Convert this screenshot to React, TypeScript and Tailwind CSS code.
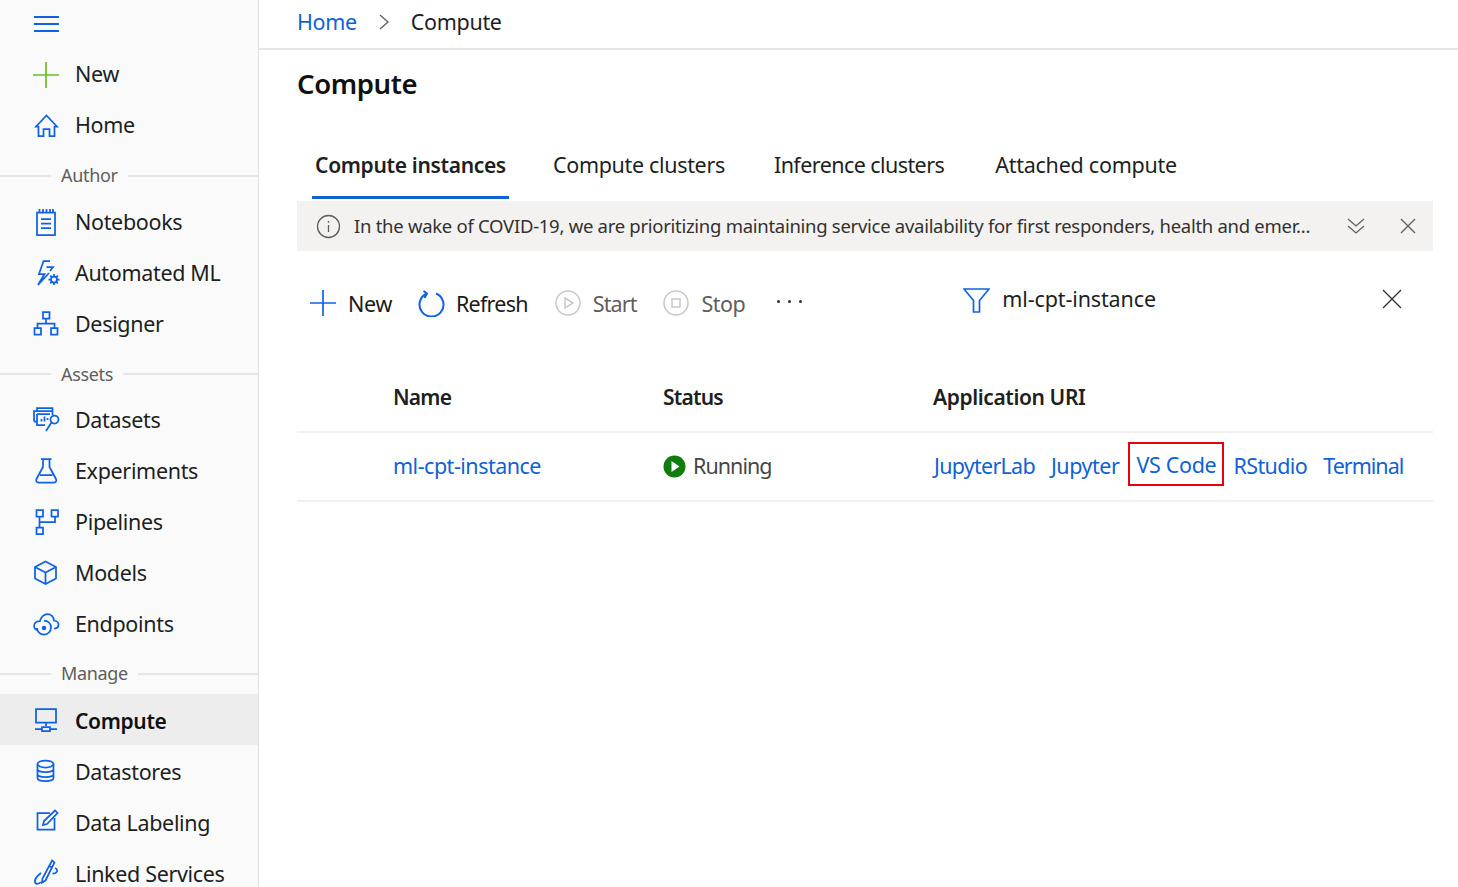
import React from 'react';

const blue = '#0f62e6';

function Ico({ children, color = blue, size = 28, sw = 1.75 }: { children: React.ReactNode; color?: string; size?: number; sw?: number }) {
  return (
    <svg width={size} height={size} viewBox="0 0 28 28" fill="none" stroke={color} strokeWidth={sw} className="shrink-0">
      {children}
    </svg>
  );
}

const icons: Record<string, React.ReactNode> = {
  plus: <Ico color="#6bbf1f" sw={1.7}><path d="M14 1v26M1 14h26" /></Ico>,
  home: (
    <Ico>
      <path d="M4 14.500 14.500 3.500 25 14.500h-2.500V24h-5v-7h-6v7h-5v-9.500z" />
    </Ico>
  ),
  notebook: (
    <Ico>
      <path d="M5 3.500h18V26H5zM7.500 0v3.500M11 0v3.500M14.500 0v3.500M18 0v3.500M21 0v3.500M9 10h10M9 14.500h10M9 19h10" />
    </Ico>
  ),
  auto: (
    <Ico>
      <path d="M18 1h-6.500L7 14h5.500L6 25l11-12M14.500 7H21l-3 4" />
      <circle cx="22" cy="19.500" r="3" />
      <path d="M22 14v2.500M22 22.500V25M16.500 19.500H19M25 19.500h2.500M18.200 15.700l1.700 1.700M24.100 21.600l1.700 1.700M25.800 15.700l-1.700 1.700M19.900 21.600l-1.700 1.700" />
    </Ico>
  ),
  designer: (
    <Ico>
      <path d="M11 1h6.500v6.500H11zM2.500 17H9v6.500H2.500zM19 17h6.500v6.500H19zM14 7.500V12.500M5.500 17v-4.500h17V17" />
    </Ico>
  ),
  datasets: (
    <Ico>
      <path d="M5 4V1h15.500v3M2 14.500V4h18.500v4M2 14.500h3M5 7h13M5 7v11h8" />
      <path d="M9.500 14.500V12M12.500 14.500V9.500M15.500 13v-2" />
      <circle cx="22.500" cy="12.500" r="4" />
      <path d="M19.500 15.500 14 24" />
    </Ico>
  ),
  flask: (
    <Ico>
      <path d="M9 1h10.500M11 1v8L4.500 21c-.8 1.800 0 3.500 2 3.500h15.500c2 0 2.800-1.700 2-3.500L17.500 9V1M8 17h12.500" />
    </Ico>
  ),
  pipelines: (
    <Ico>
      <path d="M4.500 1H11v6.500H4.500zM19.500 1H26v6.500h-6.500zM4.500 18.500H11V25H4.500zM7.500 7.500v11M7.500 13h15.500V7.500" />
    </Ico>
  ),
  cube: (
    <Ico>
      <path d="M13.500 1.500 24 7v11.500l-10.500 5.500L3 18.500V7zM3 7l10.500 5.500L24 7M13.500 12.500V24" />
    </Ico>
  ),
  endpoints: (
    <Ico>
      <path d="M5 19C2.500 18 1.500 15.500 2.500 13 3.500 10.500 6 10 8 10 9 5.500 12.500 3 15.500 3 19 3 21.500 6 22 9.500c3 .5 4.500 2 4.500 4 0 2.500-2 4-4.500 4" />
      <path d="M12 9.500c4 0 7 3 7 7s-3 7-7 7-7-3-7-6.500" />
      <circle cx="12" cy="17" r="2.300" fill={blue} stroke="none" />
    </Ico>
  ),
  compute: (
    <Ico>
      <path d="M4 3h20v13.500H4zM14 16.500V20M3 23h7M18 23h7M10 25v-4h8v4z" />
    </Ico>
  ),
  datastore: (
    <Ico>
      <ellipse cx="13.500" cy="7" rx="8" ry="3.500" />
      <path d="M5.500 7v14c0 2 3.500 3 8 3s8-1 8-3V7M5.500 12c0 2 3.500 3 8 3s8-1 8-3M5.500 17c0 2 3.500 3 8 3s8-1 8-3" />
    </Ico>
  ),
  labeling: (
    <Ico>
      <path d="M18 5H5.500v16.500h17V10M11 17l1-4L23 2.500l2.500 2.500L15 16z" />
    </Ico>
  ),
  linked: (
    <Ico>
      <path d="M20 1.500l2.500 2-9 18-3.500 2 .5-4zM17.500 7l3 2" />
      <path d="M23 9c2.500 1 3 3.500.5 5-1 .5-2 .5-3 .5" />
      <path d="M9 14C5 17 2 20 3 23.500c1 2 4 1.500 6-.5" />
    </Ico>
  ),
};

function NavItem({ icon, label, active, low }: { icon: string; label: string; active?: boolean; low?: boolean }) {
  return (
    <div className={`flex h-[51px] items-center pl-[32px] ${active ? 'bg-[#ededed] text-[21px] font-semibold text-[#111]' : 'text-[#201f1e]'}`}>
      {icons[icon]}
      <span className={`ml-[15px] whitespace-nowrap ${low ? 'pt-[4px]' : ''}`}>{label}</span>
    </div>
  );
}

function NavHeader({ label, className }: { label: string; className: string }) {
  return (
    <div className={`flex items-center pt-[3px] text-[18px] text-[#605e5c] ${className}`}>
      <div className="h-[2px] w-[51px] bg-[#e6e6e6]" />
      <span className="mx-[10px]">{label}</span>
      <div className="h-[2px] flex-1 bg-[#e6e6e6]" />
    </div>
  );
}

function Toolbtn({ icon, label, disabled, labelClass }: { icon: React.ReactNode; label: string; disabled?: boolean; labelClass?: string }) {
  return (
    <div className={`flex items-center gap-[12px] ${disabled ? 'text-[#605e5c]' : 'text-[#1b1a19]'}`}>
      {icon}
      <span className={`pt-[2px] ${labelClass ?? ''}`}>{label}</span>
    </div>
  );
}

export default function App() {
  return (
    <div
      className="flex h-[887px] w-[1458px] overflow-hidden bg-white text-[21.5px] tracking-[-0.33px]"
      style={{ fontFamily: '"Noto Sans", "Open Sans", sans-serif' }}
    >
      <aside className="h-full w-[259px] shrink-0 border-r border-[#e1e1e1] bg-[#fafafa]">
        <div className="flex h-[49px] items-center pb-[2px] pl-[33px]">
          <svg width="27" height="18" viewBox="0 0 27 18" fill="none" stroke={blue} strokeWidth="2">
            <path d="M1 2h25M1 9h25M1 16h25" />
          </svg>
        </div>
        <NavItem icon="plus" label="New" />
        <NavItem icon="home" label="Home" />
        <NavHeader label="Author" className="h-[46px]" />
        <NavItem icon="notebook" label="Notebooks" />
        <NavItem icon="auto" label="Automated ML" />
        <NavItem icon="designer" label="Designer" />
        <NavHeader label="Assets" className="h-[45px]" />
        <NavItem icon="datasets" label="Datasets" />
        <NavItem icon="flask" label="Experiments" />
        <NavItem icon="pipelines" label="Pipelines" />
        <NavItem icon="cube" label="Models" />
        <NavItem icon="endpoints" label="Endpoints" />
        <NavHeader label="Manage" className="h-[44px]" />
        <NavItem icon="compute" label="Compute" active low />
        <NavItem icon="datastore" label="Datastores" low />
        <NavItem icon="labeling" label="Data Labeling" low />
        <NavItem icon="linked" label="Linked Services" low />
      </aside>

      <main className="min-w-0 flex-1">
        <div className="flex h-[50px] items-center border-b-2 border-[#e6e6e6] pb-[4px] pl-[38px]">
          <span className="text-[#0f62d6]">Home</span>
          <svg width="12" height="18" viewBox="0 0 12 18" fill="none" stroke="#605e5c" strokeWidth="1.300" className="ml-[21px]">
            <path d="m2 2 8 7-8 7" />
          </svg>
          <span className="ml-[21px] text-[#201f1e]">Compute</span>
        </div>

        <div className="pl-[38px] pr-[25px]">
          <h1 className="mt-[12px] h-[44px] text-[27.5px] leading-[44px] font-semibold tracking-[-0.4px] text-[#111]">Compute</h1>

          <div className="mt-[33px] flex h-[60px] text-[#201f1e]">
            <div className="ml-[15px] flex h-[60px] w-[197px] justify-center border-b-[3px] border-[#0f62d6] pt-[11px] text-[21px] font-semibold whitespace-nowrap">
              Compute instances
            </div>
            <div className="ml-[44px] pt-[10px]">Compute clusters</div>
            <div className="ml-[49px] pt-[10px] tracking-[-0.57px]">Inference clusters</div>
            <div className="ml-[51px] pt-[10px] tracking-[-0.25px]">Attached compute</div>
          </div>

          <div className="mt-[2px] flex h-[50px] items-center bg-[#f3f2f1] pl-[19px] pr-[16px] text-[18.5px] tracking-[-0.28px] text-[#323130]">
            <svg width="25" height="25" viewBox="0 0 25 25" fill="none" stroke="#605e5c" strokeWidth="1.300" className="shrink-0">
              <circle cx="12.500" cy="12.500" r="11" />
              <path d="M12.500 11v7M12.500 7v1.800" />
            </svg>
            <span className="ml-[13px] flex-1 whitespace-nowrap">
              In the wake of COVID-19, we are prioritizing maintaining service availability for first responders, health and emer...
            </span>
            <svg width="20" height="18" viewBox="0 0 20 18" fill="none" stroke="#605e5c" strokeWidth="1.200" className="shrink-0">
              <path d="m2 2 8 7 8-7M2 9l8 7 8-7" />
            </svg>
            <svg width="18" height="18" viewBox="0 0 18 18" fill="none" stroke="#605e5c" strokeWidth="1.300" className="ml-[33px] shrink-0">
              <path d="m2 2 14 14M16 2 2 16" />
            </svg>
          </div>

          <div className="mt-[31px] flex h-[42px] items-center pl-[13px]">
            <Toolbtn
              label="New"
              icon={
                <svg width="26" height="26" viewBox="0 0 26 26" fill="none" stroke={blue} strokeWidth="1.700">
                  <path d="M13 0v26M0 13h26" />
                </svg>
              }
            />
            <div className="ml-[26px]">
              <Toolbtn
                label="Refresh"
                labelClass="-ml-[1px] tracking-[-0.75px]"
                icon={
                  <svg width="27" height="27" viewBox="0 0 27 27" fill="none" stroke={blue} strokeWidth="2">
                    <path d="M18 3.500a12 12 0 1 1-9 0M5.500 1 9 3.500 6.500 8" />
                  </svg>
                }
              />
            </div>
            <div className="ml-[27px]">
              <Toolbtn
                disabled
                label="Start"
                labelClass="tracking-[-0.9px]"
                icon={
                  <svg width="26" height="26" viewBox="0 0 26 26" fill="none" stroke="#c8c8c8" strokeWidth="1.500">
                    <circle cx="13" cy="13" r="12" />
                    <path d="m10 8 8 5-8 5z" />
                  </svg>
                }
              />
            </div>
            <div className="ml-[26px]">
              <Toolbtn
                disabled
                label="Stop"
                labelClass="ml-[1px] tracking-[-0.5px]"
                icon={
                  <svg width="26" height="26" viewBox="0 0 26 26" fill="none" stroke="#c8c8c8" strokeWidth="1.500">
                    <circle cx="13" cy="13" r="12" />
                    <path d="M9 9h8v8H9z" />
                  </svg>
                }
              />
            </div>
            <div className="ml-[32px] -mt-[4px] flex gap-[8px]">
              <div className="size-[3px] rounded-full bg-[#323130]" />
              <div className="size-[3px] rounded-full bg-[#323130]" />
              <div className="size-[3px] rounded-full bg-[#323130]" />
            </div>
            <svg width="27" height="27" viewBox="0 0 27 27" fill="none" stroke={blue} strokeWidth="1.700" className="ml-[161px] -mt-[6px] shrink-0">
              <path d="M1 2h25l-9.500 11.500V25h-6V13.500z" />
            </svg>
            <span className="ml-[12px] -mt-[8px] tracking-[-0.13px] text-[#201f1e]">ml-cpt-instance</span>
            <div className="flex-1" />
            <svg width="20" height="20" viewBox="0 0 20 20" fill="none" stroke="#323130" strokeWidth="1.300" className="mr-[31px] -mt-[8px] shrink-0">
              <path d="m1 1 18 18M19 1 1 19" />
            </svg>
          </div>

          <div className="mt-[56px] grid h-[53px] grid-cols-[96px_270px_270px_1fr] border-b-2 border-[#f0f0f0] pt-[2px] text-[21px] font-semibold tracking-[-0.4px] text-[#201f1e]">
            <div />
            <div className="tracking-[-0.8px]">Name</div>
            <div className="tracking-[-0.8px]">Status</div>
            <div>Application URI</div>
          </div>
          <div className="grid h-[69px] grid-cols-[96px_270px_270px_1fr] items-center border-b-2 border-[#f0f0f0] text-[#0f62d6]">
            <div />
            <div className="tracking-[-0.5px]">ml-cpt-instance</div>
            <div className="flex items-center gap-[7px] tracking-[-0.95px] text-[#484644]">
              <svg width="23" height="23" viewBox="0 0 23 23" className="shrink-0">
                <circle cx="11.500" cy="11.500" r="11" fill="#107c10" />
                <path d="m8.500 6 8 5.500-8 5.500z" fill="#fff" />
              </svg>
              Running
            </div>
            <div className="flex items-center whitespace-nowrap">
              <span className="ml-[1px] tracking-[-0.73px]">JupyterLab</span>
              <span className="ml-[16px] tracking-[-0.45px]">Jupyter</span>
              <span className="ml-[9px] mb-[5px] flex h-[44px] items-center border-2 border-[#e60012] px-[6px] pt-[3px]">VS Code</span>
              <span className="ml-[9px] tracking-[-0.6px]">RStudio</span>
              <span className="ml-[16px] tracking-[-1px]">Terminal</span>
            </div>
          </div>
        </div>
      </main>
    </div>
  );
}
